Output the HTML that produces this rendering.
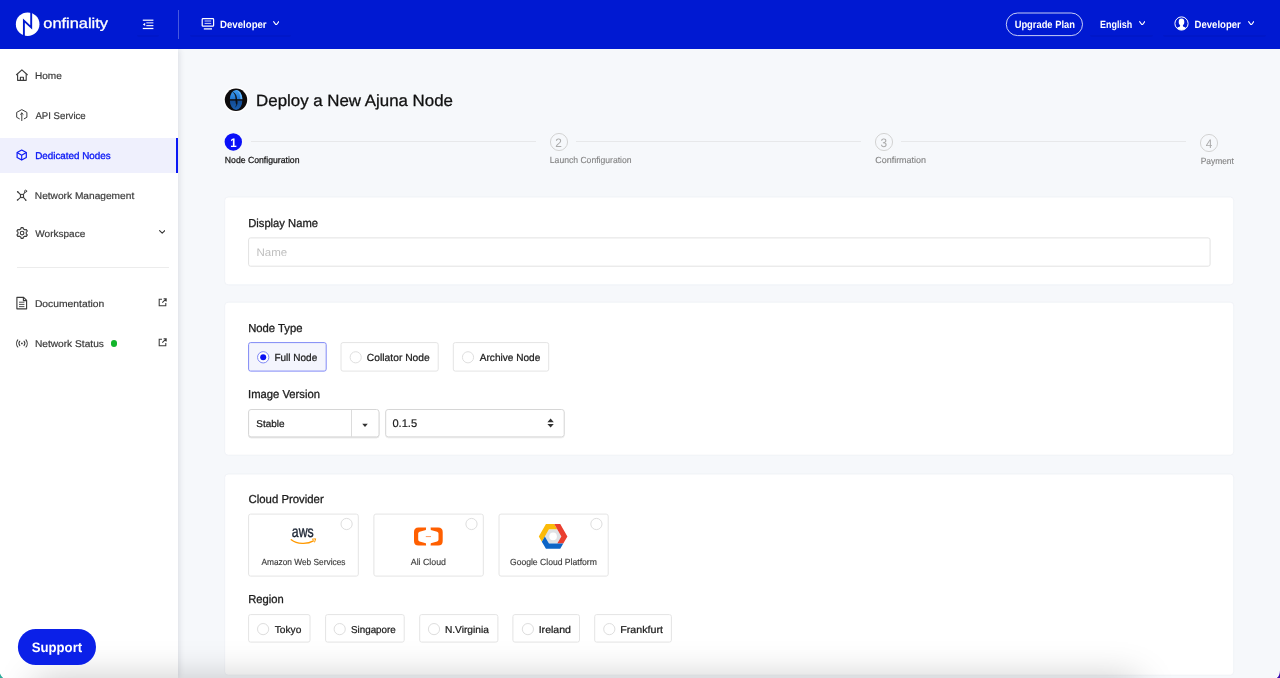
<!DOCTYPE html>
<html lang="en"><head><meta charset="utf-8"><title>Deploy a New Ajuna Node - OnFinality</title>
<style>
html,body{margin:0;padding:0}
body{width:1280px;height:678px;overflow:hidden;background:#f6f8fb;font-family:"Liberation Sans",Arial,sans-serif;position:relative;text-rendering:geometricPrecision}
.a{position:absolute;display:block}
.t{position:absolute;white-space:nowrap;line-height:1;transform-origin:0 0;display:block}
#app{position:absolute;left:0;top:0;width:1280px;height:678px;overflow:hidden;will-change:transform}
</style></head><body><div id="app">
<div class="a" style="left:0;top:0;width:1280px;height:49px;background:#0019d2"></div>
<div class="a" style="left:136.7px;top:35px;width:22.5px;height:2.4px;background:rgba(0,0,60,0.055);border-radius:0 0 3px 3px;filter:blur(0.5px)"></div>
<div class="a" style="left:190.3px;top:35px;width:100.3px;height:2.4px;background:rgba(0,0,60,0.055);border-radius:0 0 3px 3px;filter:blur(0.5px)"></div>
<div class="a" style="left:1090.4px;top:35px;width:62.6px;height:2.4px;background:rgba(0,0,60,0.055);border-radius:0 0 3px 3px;filter:blur(0.5px)"></div>
<div class="a" style="left:1163.0px;top:35px;width:103.0px;height:2.4px;background:rgba(0,0,60,0.055);border-radius:0 0 3px 3px;filter:blur(0.5px)"></div>
<svg class="a" style="left:14px;top:10px" width="28" height="28" viewBox="14 10 28 28"><circle cx="27.65" cy="24.2" r="11.8" fill="#fff"/><path d="M23.9 36.6 V20.6 L31.2 27.4 V11.8" fill="none" stroke="#0019d2" stroke-width="1.9" stroke-linejoin="miter"/></svg>
<span id="t0" class="t" style="left:43px;top:16px;font-size:14.20px;font-weight:400;color:#fff;transform:matrix(1.1556,0,0,1,0.30,0.60);-webkit-text-stroke:0.3px #fff;">onfinality</span>
<svg class="a" style="left:140px;top:17px" width="16" height="14" viewBox="140 17 16 14" fill="#fff"><rect x="142.8" y="19.6" width="10.6" height="1.2"/><rect x="146.3" y="22.3" width="7.1" height="1.1" opacity="0.85"/><rect x="146.3" y="25.1" width="7.1" height="1.1"/><rect x="142.8" y="27.9" width="10.6" height="1.2"/><path d="M142.8 24.4 L145.2 22.8 V26 Z"/></svg>
<div class="a" style="left:178px;top:9.5px;width:1px;height:29px;background:rgba(255,255,255,0.28)"></div>
<svg class="a" style="left:200px;top:16px" width="16" height="16" viewBox="200 16 16 16" fill="none" stroke="#fff"><rect x="202.2" y="18.6" width="11.4" height="7.6" rx="0.8" stroke-width="1.2"/><path d="M204.6 21 H211.2 M204.6 23.4 H211.2" stroke-width="1" opacity="0.8"/><path d="M203.8 28.9 H212" stroke-width="1.3"/></svg>
<span id="t1" class="t" style="left:220px;top:20px;font-size:10.50px;font-weight:700;color:#fff;transform:matrix(0.9166,0,0,1,0.07,0.30);">Developer</span>
<svg class="a" style="left:272.8px;top:20.8px" width="6.4" height="4.7" viewBox="0 0 6.4 4.7"><path d="M0.6 0.6 L3.20 4.10 L5.80 0.6" fill="none" stroke="#fff" stroke-width="1.10" stroke-linecap="round" stroke-linejoin="round"/></svg>
<svg class="a" style="left:1003px;top:10px;" width="82" height="29" viewBox="1003 10 82 29"><rect x="1006.30" y="13.00" width="76.20" height="22.60" rx="11.3" fill="none" stroke="rgba(255,255,255,0.78)" stroke-width="1.00"/></svg>
<span id="t2" class="t" style="left:1014px;top:20px;font-size:10.50px;font-weight:700;color:#fff;transform:matrix(0.8904,0,0,1,0.65,0.20);">Upgrade Plan</span>
<span id="t3" class="t" style="left:1100px;top:20px;font-size:10.50px;font-weight:700;color:#fff;transform:matrix(0.8502,0,0,1,0.02,0.40);">English</span>
<svg class="a" style="left:1139.0px;top:20.8px" width="6.4" height="4.7" viewBox="0 0 6.4 4.7"><path d="M0.6 0.6 L3.20 4.10 L5.80 0.6" fill="none" stroke="#fff" stroke-width="1.10" stroke-linecap="round" stroke-linejoin="round"/></svg>
<svg class="a" style="left:1173.9px;top:15.9px" width="15" height="15" viewBox="0 0 15 15"><defs><clipPath id="uc"><circle cx="7.5" cy="7.5" r="6.5"/></clipPath></defs><circle cx="7.5" cy="7.5" r="6.6" fill="none" stroke="#fff" stroke-width="1"/><g clip-path="url(#uc)" fill="#fff"><ellipse cx="7.5" cy="6" rx="2.8" ry="3.4"/><path d="M2 15 C2.2 11.8 4 10.9 6 10.4 L6.2 8.6 H8.8 L9 10.4 C11 10.9 12.8 11.8 13 15 Z"/></g></svg>
<span id="t4" class="t" style="left:1194px;top:20px;font-size:10.50px;font-weight:700;color:#fff;transform:matrix(0.9110,0,0,1,0.57,0.40);">Developer</span>
<svg class="a" style="left:1247.8px;top:20.8px" width="6.4" height="4.7" viewBox="0 0 6.4 4.7"><path d="M0.6 0.6 L3.20 4.10 L5.80 0.6" fill="none" stroke="#fff" stroke-width="1.10" stroke-linecap="round" stroke-linejoin="round"/></svg>
<div class="a" style="left:0;top:49px;width:178px;height:629px;background:#fff;box-shadow:1px 0 6px rgba(20,25,50,0.12);clip-path:inset(0 -20px 0 0)"></div>
<div class="a" style="left:0;top:138.2px;width:178.4px;height:34.4px;background:#eff0fd"></div>
<div class="a" style="left:176.3px;top:138.2px;width:2.2px;height:34.4px;background:#0a17f5"></div>
<svg class="a" style="left:15.2px;top:68.3px" width="14" height="14" viewBox="15 68 14 14" fill="none" stroke="#3c3c3c" stroke-width="1.15" stroke-linejoin="round"><path d="M16.2 75 L21.9 69.8 L27.6 75"/><path d="M17.6 74.2 V80.3 H26.2 V74.2"/><path d="M20.4 80.3 V77.2 H23.4 V80.3"/></svg>
<span id="t5" class="t" style="left:34px;top:72px;font-size:9.80px;font-weight:400;color:#3a3a3a;transform:matrix(1.0289,0,0,1,0.96,0.00);-webkit-text-stroke:0.18px #3a3a3a;">Home</span>
<svg class="a" style="left:15px;top:108px" width="14" height="14" viewBox="15 108 14 14" fill="none" stroke="#3c3c3c" stroke-width="1" stroke-linecap="round" stroke-linejoin="round"><path d="M19.4 118.8 L16.7 117.3 V112.4 L21.8 109.6 L26.9 112.4 V117.3 L24.2 118.8"/><path d="M21.8 113 V120.6 M20.5 114.3 L21.8 113 L23.1 114.3"/></svg>
<span id="t6" class="t" style="left:35px;top:112px;font-size:9.80px;font-weight:400;color:#3a3a3a;transform:matrix(0.9824,0,0,1,0.42,0.20);-webkit-text-stroke:0.18px #3a3a3a;">API Service</span>
<svg class="a" style="left:15px;top:148px" width="14" height="14" viewBox="15 148 14 14" fill="none" stroke="#0a17f5" stroke-width="1.2" stroke-linejoin="round"><path d="M21.7 150 L26.3 152.6 V157.5 L21.7 160.1 L17.1 157.5 V152.6 Z"/><path d="M17.1 152.6 L21.7 155.2 L26.3 152.6 M21.7 155.2 V160.1" stroke-width="1.1"/></svg>
<span id="t7" class="t" style="left:35px;top:152px;font-size:9.80px;font-weight:400;color:#0a17f5;transform:matrix(1.0061,0,0,1,0.13,0.00);-webkit-text-stroke:0.32px #0a17f5;">Dedicated Nodes</span>
<svg class="a" style="left:15px;top:188px" width="14" height="14" viewBox="15 188 14 14" fill="none" stroke="#3c3c3c" stroke-width="1.1" stroke-linecap="round"><circle cx="22" cy="196" r="1.7"/><path d="M20.8 194.8 L17.9 192 M23.2 194.8 L24.9 192.2 M20.8 197.2 L17.8 199.8 M23.2 197.2 L25.6 199.9"/><circle cx="25.6" cy="191.2" r="1.05" stroke-width="0.9"/><circle cx="17.6" cy="191.7" r="0.75" fill="#3c3c3c" stroke="none"/><circle cx="17.5" cy="199.9" r="0.75" fill="#3c3c3c" stroke="none"/><circle cx="25.9" cy="200.2" r="0.75" fill="#3c3c3c" stroke="none"/></svg>
<span id="t8" class="t" style="left:34px;top:192px;font-size:9.80px;font-weight:400;color:#3a3a3a;transform:matrix(1.0371,0,0,1,0.81,0.30);-webkit-text-stroke:0.18px #3a3a3a;">Network Management</span>
<svg class="a" style="left:15px;top:226px" width="14" height="14" viewBox="15 226 14 14" fill="none" stroke="#3c3c3c" stroke-width="1.15" stroke-linejoin="round"><path d="M20.73 229.03 L21.14 227.58 L23.06 227.58 L23.47 229.03 L24.86 229.83 L26.31 229.46 L27.27 231.12 L26.22 232.20 L26.22 233.80 L27.27 234.88 L26.31 236.54 L24.86 236.17 L23.47 236.97 L23.06 238.42 L21.14 238.42 L20.73 236.97 L19.34 236.17 L17.89 236.54 L16.93 234.88 L17.98 233.80 L17.98 232.20 L16.93 231.12 L17.89 229.46 L19.34 229.83 Z"/><circle cx="22.1" cy="233" r="1.8"/></svg>
<span id="t9" class="t" style="left:35px;top:229px;font-size:9.80px;font-weight:400;color:#3a3a3a;transform:matrix(1.0219,0,0,1,0.34,0.80);-webkit-text-stroke:0.18px #3a3a3a;">Workspace</span>
<svg class="a" style="left:158.7px;top:230.0px" width="6.4" height="3.8" viewBox="0 0 6.4 3.8"><path d="M0.6 0.6 L3.20 3.20 L5.80 0.6" fill="none" stroke="#383838" stroke-width="1.15" stroke-linecap="round" stroke-linejoin="round"/></svg>
<div class="a" style="left:16.8px;top:266.6px;width:152px;height:1px;background:#ececec"></div>
<svg class="a" style="left:15px;top:296px" width="14" height="14" viewBox="15 296 14 14" fill="none" stroke="#3c3c3c" stroke-width="1.15" stroke-linejoin="round"><path d="M16.9 297.4 H23.6 L26.6 300.4 V308.8 H16.9 Z"/><path d="M23.4 297.6 V300.6 H26.4"/><path d="M19 302.2 H24.4 M19 304.4 H24.4 M19 306.6 H24.4" stroke-width="0.9"/></svg>
<span id="t10" class="t" style="left:34px;top:300px;font-size:9.80px;font-weight:400;color:#3a3a3a;transform:matrix(1.0538,0,0,1,0.88,0.00);-webkit-text-stroke:0.18px #3a3a3a;">Documentation</span>
<svg class="a" style="left:158.1px;top:297.8px" width="9" height="9" viewBox="0 0 9 9" fill="none" stroke="#3a3a3a" stroke-width="1.05"><path d="M4 1.2 H1.2 V7.8 H7.8 V5"/><path d="M5.6 0.8 H8.2 V3.4 M8.1 0.9 L4.3 4.7"/></svg>
<svg class="a" style="left:15px;top:336px" width="14" height="14" viewBox="15 336 14 14" fill="none" stroke="#3c3c3c" stroke-width="1.05" stroke-linecap="round"><circle cx="21.9" cy="343.4" r="0.9" fill="#3c3c3c" stroke="none"/><path d="M19.8 341.2 C18.8 342.4 18.8 344.4 19.8 345.6 M24 341.2 C25 342.4 25 344.4 24 345.6"/><path d="M17.8 339.8 C16.2 341.8 16.2 345 17.8 347 M26 339.8 C27.6 341.8 27.6 345 26 347"/></svg>
<span id="t11" class="t" style="left:34px;top:339px;font-size:9.80px;font-weight:400;color:#3a3a3a;transform:matrix(1.0389,0,0,1,0.88,0.90);-webkit-text-stroke:0.18px #3a3a3a;">Network Status</span>
<div class="a" style="left:110.8px;top:340.4px;width:6.2px;height:6.2px;border-radius:50%;background:#12b52b"></div>
<svg class="a" style="left:158.1px;top:337.8px" width="9" height="9" viewBox="0 0 9 9" fill="none" stroke="#3a3a3a" stroke-width="1.05"><path d="M4 1.2 H1.2 V7.8 H7.8 V5"/><path d="M5.6 0.8 H8.2 V3.4 M8.1 0.9 L4.3 4.7"/></svg>
<svg class="a" style="left:222px;top:86px" width="28" height="28" viewBox="222 86 28 28"><defs><linearGradient id="ag" x1="0" y1="0" x2="0" y2="1"><stop offset="0" stop-color="#3d9df2"/><stop offset="0.49" stop-color="#1f74cf"/><stop offset="0.52" stop-color="#124a92"/><stop offset="1" stop-color="#1a60b2"/></linearGradient><clipPath id="ac"><ellipse cx="236.1" cy="99.9" rx="6.3" ry="10"/></clipPath></defs><circle cx="236" cy="99.8" r="12.7" fill="#fff"/><circle cx="236" cy="99.8" r="11.2" fill="#0d0b0c"/><ellipse cx="236.1" cy="99.9" rx="6.3" ry="10" fill="url(#ag)"/><g clip-path="url(#ac)"><path d="M233.2 89.6 C239.5 90.5 240.8 95 240.4 99.9 L243.5 99.9 L243.5 88 Z" fill="#6ab8fb" opacity="0.9"/><path d="M232 91.6 C236.8 93.5 237.6 97 237 104.5 C235.2 104.5 235.6 100 235.4 98 C235.2 95.5 234.5 93.6 232 91.6 Z" fill="#0d0b0c" opacity="0.85"/><path d="M236.4 101 C236.6 104 236 106 234.6 107.8 C237.4 106.5 238 103 237.6 101 Z" fill="#0d0b0c" opacity="0.6"/></g><path d="M229 99.9 H243.2" stroke="#0d0b0c" stroke-width="1.4"/></svg>
<span id="t12" class="t" style="left:256px;top:93px;font-size:16.30px;font-weight:400;color:#111;transform:matrix(1.0358,0,0,1,0.07,0.40);-webkit-text-stroke:0.3px #111;">Deploy a New Ajuna Node</span>
<svg class="a" style="left:222px;top:131px" width="22" height="22" viewBox="222 131 22 22"><circle cx="233.3" cy="141.95" r="8.7" fill="#0a10f8"/></svg>
<span id="t13" class="t" style="left:230px;top:137px;font-size:12.40px;font-weight:700;color:#fff;transform:matrix(0.9267,0,0,1,0.20,0.00);">1</span>
<svg class="a" style="left:547.65px;top:130.65px" width="22" height="22" viewBox="0 0 22 22"><circle cx="11" cy="11" r="8.55" fill="none" stroke="#d2d2d2" stroke-width="1"/></svg>
<span id="t14" class="t" style="left:555px;top:136px;font-size:12.30px;font-weight:400;color:#aaaaaa;transform:matrix(0.9644,0,0,1,0.35,0.80);">2</span>
<svg class="a" style="left:872.85px;top:130.65px" width="22" height="22" viewBox="0 0 22 22"><circle cx="11" cy="11" r="8.55" fill="none" stroke="#d2d2d2" stroke-width="1"/></svg>
<span id="t15" class="t" style="left:880px;top:136px;font-size:12.30px;font-weight:400;color:#aaaaaa;transform:matrix(0.9644,0,0,1,0.55,0.80);">3</span>
<svg class="a" style="left:1198.00px;top:131.65px" width="22" height="22" viewBox="0 0 22 22"><circle cx="11" cy="11" r="8.55" fill="none" stroke="#d2d2d2" stroke-width="1"/></svg>
<span id="t16" class="t" style="left:1205px;top:137px;font-size:12.30px;font-weight:400;color:#aaaaaa;transform:matrix(0.9644,0,0,1,0.70,0.80);">4</span>
<div class="a" style="left:250.5px;top:141.2px;width:285.2px;height:1px;background:#e7e8ea"></div>
<div class="a" style="left:575.7px;top:141.2px;width:285.3px;height:1px;background:#e7e8ea"></div>
<div class="a" style="left:901.3px;top:141.2px;width:284.9px;height:1px;background:#e7e8ea"></div>
<span id="t17" class="t" style="left:224px;top:156px;font-size:8.90px;font-weight:400;color:#161616;transform:matrix(0.9757,0,0,1,0.85,0.30);-webkit-text-stroke:0.25px #161616;">Node Configuration</span>
<span id="t18" class="t" style="left:549px;top:156px;font-size:8.90px;font-weight:400;color:#828282;transform:matrix(0.9683,0,0,1,0.83,0.30);-webkit-text-stroke:0.12px #828282;">Launch Configuration</span>
<span id="t19" class="t" style="left:875px;top:156px;font-size:8.90px;font-weight:400;color:#828282;transform:matrix(1.0082,0,0,1,0.24,0.30);-webkit-text-stroke:0.12px #828282;">Confirmation</span>
<span id="t20" class="t" style="left:1200px;top:156px;font-size:8.90px;font-weight:400;color:#828282;transform:matrix(0.9488,0,0,1,0.64,0.70);-webkit-text-stroke:0.12px #828282;">Payment</span>
<svg class="a" style="left:222px;top:194px;" width="1015" height="94" viewBox="222 194 1015 94"><rect x="224.70" y="197.00" width="1009.00" height="87.80" rx="3.5" fill="#fff" stroke="#eef0f5" stroke-width="0.80"/></svg>
<svg class="a" style="left:222px;top:299px;" width="1015" height="159" viewBox="222 299 1015 159"><rect x="224.70" y="302.20" width="1009.00" height="153.00" rx="3.5" fill="#fff" stroke="#eef0f5" stroke-width="0.80"/></svg>
<svg class="a" style="left:222px;top:471px;" width="1015" height="207" viewBox="222 471 1015 207"><rect x="224.70" y="474.00" width="1009.00" height="201.20" rx="3.5" fill="#fff" stroke="#eef0f5" stroke-width="0.80"/></svg>
<span id="t21" class="t" style="left:248px;top:218px;font-size:11.60px;font-weight:400;color:#1d1d1d;transform:matrix(0.9668,0,0,1,0.19,0.40);-webkit-text-stroke:0.3px #1d1d1d;">Display Name</span>
<svg class="a" style="left:246px;top:235px;" width="967" height="34" viewBox="246 235 967 34"><rect x="248.60" y="237.90" width="961.50" height="28.30" rx="2.0" fill="#fff" stroke="#e2e2e2" stroke-width="1.00"/></svg>
<span id="t22" class="t" style="left:256px;top:247px;font-size:11.10px;font-weight:400;color:#bebebe;transform:matrix(1.0370,0,0,1,0.53,0.90);">Name</span>
<span id="t23" class="t" style="left:248px;top:323px;font-size:11.60px;font-weight:400;color:#1d1d1d;transform:matrix(0.9712,0,0,1,0.20,0.40);-webkit-text-stroke:0.3px #1d1d1d;">Node Type</span>
<svg class="a" style="left:246px;top:340px;" width="83" height="34" viewBox="246 340 83 34"><rect x="248.60" y="342.60" width="77.60" height="28.50" rx="2.0" fill="#f4f5fd" stroke="#8089f6" stroke-width="1.00"/></svg>
<svg class="a" style="left:254px;top:348px" width="18" height="18" viewBox="254 348 18 18"><circle cx="263.20" cy="357.30" r="5.65" fill="#fff" stroke="#7f88f7" stroke-width="1"/><circle cx="263.20" cy="357.30" r="3" fill="#0a10f2"/></svg>
<span id="t24" class="t" style="left:274px;top:354px;font-size:10.30px;font-weight:400;color:#1c1c1c;transform:matrix(0.9715,0,0,1,0.43,0.10);-webkit-text-stroke:0.24px #1c1c1c;">Full Node</span>
<svg class="a" style="left:338px;top:340px;" width="103" height="34" viewBox="338 340 103 34"><rect x="341.00" y="342.60" width="97.20" height="28.50" rx="2.0" fill="#fff" stroke="#e4e4e4" stroke-width="1.00"/></svg>
<svg class="a" style="left:346px;top:348px" width="18" height="18" viewBox="346 348 18 18"><circle cx="355.70" cy="357.30" r="5.6" fill="#fff" stroke="#dedede" stroke-width="1"/></svg>
<span id="t25" class="t" style="left:366px;top:354px;font-size:10.30px;font-weight:400;color:#1c1c1c;transform:matrix(0.9990,0,0,1,0.87,0.10);-webkit-text-stroke:0.24px #1c1c1c;">Collator Node</span>
<svg class="a" style="left:450px;top:340px;" width="102" height="34" viewBox="450 340 102 34"><rect x="453.30" y="342.60" width="95.40" height="28.50" rx="2.0" fill="#fff" stroke="#e4e4e4" stroke-width="1.00"/></svg>
<svg class="a" style="left:459px;top:348px" width="18" height="18" viewBox="459 348 18 18"><circle cx="468.00" cy="357.30" r="5.6" fill="#fff" stroke="#dedede" stroke-width="1"/></svg>
<span id="t26" class="t" style="left:479px;top:354px;font-size:10.30px;font-weight:400;color:#1c1c1c;transform:matrix(0.9787,0,0,1,0.77,0.10);-webkit-text-stroke:0.24px #1c1c1c;">Archive Node</span>
<span id="t27" class="t" style="left:248px;top:389px;font-size:11.60px;font-weight:400;color:#1d1d1d;transform:matrix(0.9705,0,0,1,0.08,0.00);-webkit-text-stroke:0.3px #1d1d1d;">Image Version</span>
<svg class="a" style="left:246px;top:407px;filter:drop-shadow(0 1px 0.6px rgba(0,0,0,0.10))" width="136" height="33" viewBox="246 407 136 33"><rect x="248.60" y="409.50" width="130.40" height="27.40" rx="2.5" fill="#fff" stroke="#d6d6d6" stroke-width="1.00"/></svg>
<div class="a" style="left:351.2px;top:409.5px;width:1px;height:27.4px;background:#dcdcdc"></div>
<span id="t28" class="t" style="left:256px;top:420px;font-size:9.80px;font-weight:400;color:#1c1c1c;transform:matrix(1.0169,0,0,1,0.32,0.40);-webkit-text-stroke:0.24px #1c1c1c;">Stable</span>
<svg class="a" style="left:361px;top:422px" width="8" height="6" viewBox="0 0 8 6"><path d="M1.2 1.8 H6.8 L4 5 Z" fill="#333"/></svg>
<svg class="a" style="left:383px;top:407px;filter:drop-shadow(0 1px 0.6px rgba(0,0,0,0.06))" width="184" height="33" viewBox="383 407 184 33"><rect x="385.70" y="409.50" width="178.50" height="27.40" rx="2.5" fill="#fff" stroke="#d6d6d6" stroke-width="1.00"/></svg>
<span id="t29" class="t" style="left:392px;top:419px;font-size:11.00px;font-weight:400;color:#1a1a1a;transform:matrix(1.0094,0,0,1,0.41,0.20);-webkit-text-stroke:0.2px #1a1a1a;">0.1.5</span>
<svg class="a" style="left:546px;top:417px" width="9" height="12" viewBox="0 0 9 12"><path d="M1.4 5.2 L4.6 1.6 L7.8 5.2 Z M1.4 6.9 L4.6 10.5 L7.8 6.9 Z" fill="#333"/></svg>
<span id="t30" class="t" style="left:248px;top:494px;font-size:11.60px;font-weight:400;color:#1d1d1d;transform:matrix(0.9808,0,0,1,0.52,0.40);-webkit-text-stroke:0.3px #1d1d1d;">Cloud Provider</span>
<svg class="a" style="left:246px;top:511px;" width="115" height="68" viewBox="246 511 115 68"><rect x="248.60" y="514.10" width="109.70" height="62.00" rx="2.0" fill="#fff" stroke="#e4e4e4" stroke-width="1.00"/></svg>
<svg class="a" style="left:337px;top:515px" width="18" height="18" viewBox="337 515 18 18"><circle cx="346.60" cy="524.00" r="5.6" fill="#fff" stroke="#dedede" stroke-width="1"/></svg>
<span id="t31" class="t" style="left:291px;top:524px;font-size:16.00px;font-weight:400;color:#1c2534;transform:matrix(0.7666,0,0,1,0.83,0.70);-webkit-text-stroke:0.4px #1c2534;">aws</span>
<svg class="a" style="left:289px;top:537px" width="30" height="9" viewBox="289 537 30 9" fill="none" stroke="#f90" stroke-linecap="round"><path d="M291.3 539.7 C297 544.3 307.5 544.5 313.4 540.9" stroke-width="1.35"/><path d="M312.4 539.2 L315.7 538.8 L314.6 542" stroke-width="1" stroke-linejoin="round"/></svg>
<span id="t32" class="t" style="left:261px;top:558px;font-size:8.90px;font-weight:400;color:#3c3c3c;transform:matrix(0.9388,0,0,1,0.38,0.40);-webkit-text-stroke:0.15px #3c3c3c;">Amazon Web Services</span>
<svg class="a" style="left:371px;top:511px;" width="115" height="68" viewBox="371 511 115 68"><rect x="373.90" y="514.10" width="109.40" height="62.00" rx="2.0" fill="#fff" stroke="#e4e4e4" stroke-width="1.00"/></svg>
<svg class="a" style="left:462px;top:515px" width="18" height="18" viewBox="462 515 18 18"><circle cx="471.50" cy="524.00" r="5.6" fill="#fff" stroke="#dedede" stroke-width="1"/></svg>
<svg class="a" style="left:412px;top:525px" width="34" height="24" viewBox="412 525 34 24"><path d="M426.1 527.5 H418.5 Q414 527.5 414 532 V541.1 Q414 545.6 418.5 545.6 H426.1 L425.9 543.2 L419.6 541.4 Q418.2 541 418.2 539.6 V533.5 Q418.2 532.1 419.6 531.7 L425.9 529.9 Z" fill="#ff5f00"/><path d="M426.1 527.5 H418.5 Q414 527.5 414 532 V541.1 Q414 545.6 418.5 545.6 H426.1 L425.9 543.2 L419.6 541.4 Q418.2 541 418.2 539.6 V533.5 Q418.2 532.1 419.6 531.7 L425.9 529.9 Z" fill="#ff5f00" transform="translate(856.7 0) scale(-1 1)"/><path d="M425.8 536.6 H431" stroke="#ff7e33" stroke-width="0.8" fill="none"/></svg>
<span id="t33" class="t" style="left:410px;top:558px;font-size:8.90px;font-weight:400;color:#3c3c3c;transform:matrix(0.9908,0,0,1,0.77,0.40);-webkit-text-stroke:0.15px #3c3c3c;">Ali Cloud</span>
<svg class="a" style="left:496px;top:511px;" width="115" height="68" viewBox="496 511 115 68"><rect x="499.00" y="514.10" width="109.20" height="62.00" rx="2.0" fill="#fff" stroke="#e4e4e4" stroke-width="1.00"/></svg>
<svg class="a" style="left:587px;top:515px" width="18" height="18" viewBox="587 515 18 18"><circle cx="596.40" cy="524.00" r="5.6" fill="#fff" stroke="#dedede" stroke-width="1"/></svg>
<svg class="a" style="left:537px;top:522px" width="32" height="29" viewBox="537 522 32 29"><g transform="translate(553.1 536.4)"><path d="M-8.25 0.00 L-4.12 -7.15 L4.12 -7.15 L8.25 0.00 L4.12 7.15 L-4.12 7.15 Z" fill="#dfe2e5"/><path d="M1.10 -12.40 L-7.15 -12.40 L-14.30 0.00 L-11.28 5.24 L-8.25 0.00 L-4.12 -7.15 L4.12 -7.15 Z" fill="#fbba08"/><path d="M1.10 -12.40 L7.15 -12.40 L14.30 0.00 L10.18 7.15 L4.12 7.15 L8.25 0.00 L4.12 -7.15 Z" fill="#ea3f2f"/><path d="M10.18 7.15 L7.15 12.40 L-7.15 12.40 L-11.28 5.24 L-8.25 0.00 L-4.12 7.15 L4.12 7.15 Z" fill="#0d65c6"/><circle r="3.8" fill="#fff"/></g></svg>
<span id="t34" class="t" style="left:509px;top:558px;font-size:8.90px;font-weight:400;color:#3c3c3c;transform:matrix(0.9676,0,0,1,0.95,0.40);-webkit-text-stroke:0.15px #3c3c3c;">Google Cloud Platform</span>
<span id="t35" class="t" style="left:248px;top:594px;font-size:11.60px;font-weight:400;color:#1d1d1d;transform:matrix(0.9648,0,0,1,0.23,0.40);-webkit-text-stroke:0.3px #1d1d1d;">Region</span>
<svg class="a" style="left:246px;top:612px;" width="67" height="33" viewBox="246 612 67 33"><rect x="248.60" y="614.60" width="61.40" height="27.50" rx="2.0" fill="#fff" stroke="#e4e4e4" stroke-width="1.00"/></svg>
<svg class="a" style="left:254px;top:620px" width="18" height="18" viewBox="254 620 18 18"><circle cx="263.10" cy="629.10" r="5.6" fill="#fff" stroke="#dedede" stroke-width="1"/></svg>
<span id="t36" class="t" style="left:274px;top:626px;font-size:10.00px;font-weight:400;color:#1c1c1c;transform:matrix(1.0193,0,0,1,0.76,0.00);-webkit-text-stroke:0.24px #1c1c1c;">Tokyo</span>
<svg class="a" style="left:323px;top:612px;" width="84" height="33" viewBox="323 612 84 33"><rect x="325.60" y="614.60" width="78.60" height="27.50" rx="2.0" fill="#fff" stroke="#e4e4e4" stroke-width="1.00"/></svg>
<svg class="a" style="left:330px;top:620px" width="18" height="18" viewBox="330 620 18 18"><circle cx="339.70" cy="629.10" r="5.6" fill="#fff" stroke="#dedede" stroke-width="1"/></svg>
<span id="t37" class="t" style="left:350px;top:626px;font-size:10.00px;font-weight:400;color:#1c1c1c;transform:matrix(0.9817,0,0,1,0.99,0.00);-webkit-text-stroke:0.24px #1c1c1c;">Singapore</span>
<svg class="a" style="left:417px;top:612px;" width="84" height="33" viewBox="417 612 84 33"><rect x="419.70" y="614.60" width="78.20" height="27.50" rx="2.0" fill="#fff" stroke="#e4e4e4" stroke-width="1.00"/></svg>
<svg class="a" style="left:425px;top:620px" width="18" height="18" viewBox="425 620 18 18"><circle cx="434.00" cy="629.10" r="5.6" fill="#fff" stroke="#dedede" stroke-width="1"/></svg>
<span id="t38" class="t" style="left:444px;top:626px;font-size:10.00px;font-weight:400;color:#1c1c1c;transform:matrix(1.0179,0,0,1,0.91,0.00);-webkit-text-stroke:0.24px #1c1c1c;">N.Virginia</span>
<svg class="a" style="left:510px;top:612px;" width="72" height="33" viewBox="510 612 72 33"><rect x="512.90" y="614.60" width="66.60" height="27.50" rx="2.0" fill="#fff" stroke="#e4e4e4" stroke-width="1.00"/></svg>
<svg class="a" style="left:518px;top:620px" width="18" height="18" viewBox="518 620 18 18"><circle cx="527.90" cy="629.10" r="5.6" fill="#fff" stroke="#dedede" stroke-width="1"/></svg>
<span id="t39" class="t" style="left:538px;top:626px;font-size:10.00px;font-weight:400;color:#1c1c1c;transform:matrix(1.0559,0,0,1,0.68,0.00);-webkit-text-stroke:0.24px #1c1c1c;">Ireland</span>
<svg class="a" style="left:592px;top:612px;" width="82" height="33" viewBox="592 612 82 33"><rect x="594.70" y="614.60" width="76.70" height="27.50" rx="2.0" fill="#fff" stroke="#e4e4e4" stroke-width="1.00"/></svg>
<svg class="a" style="left:600px;top:620px" width="18" height="18" viewBox="600 620 18 18"><circle cx="609.30" cy="629.10" r="5.6" fill="#fff" stroke="#dedede" stroke-width="1"/></svg>
<span id="t40" class="t" style="left:620px;top:626px;font-size:10.00px;font-weight:400;color:#1c1c1c;transform:matrix(1.0645,0,0,1,0.32,0.00);-webkit-text-stroke:0.24px #1c1c1c;">Frankfurt</span>
<div class="a" style="left:35px;top:680px;width:1103px;height:120px;box-shadow:0 0 36px rgba(0,0,0,0.23)"></div>
<svg class="a" style="left:15px;top:627px;" width="83" height="40" viewBox="15 627 83 40"><rect x="17.90" y="629.00" width="78.10" height="36.00" rx="18.0" fill="#0b20e8" stroke="none" stroke-width="0.00"/></svg>
<span id="t41" class="t" style="left:31px;top:641px;font-size:13.70px;font-weight:700;color:#fff;transform:matrix(0.9625,0,0,1,0.65,0.10);">Support</span>
<svg class="a" style="left:1270px;top:668px" width="10" height="10" viewBox="1270 668 10 10"><path d="M1280 669 Q1279.6 675.2 1275.6 678 L1280 678 Z" fill="#fff"/><path d="M1280 670.2 Q1279.8 675.8 1276.8 678 L1280 678 Z" fill="#3b0cae"/></svg><svg class="a" style="left:0;top:668px" width="10" height="10" viewBox="0 668 10 10"><path d="M0 673.6 Q1 676.4 3.2 678 L0 678 Z" fill="#2fab9b"/></svg>
</div></body></html>
